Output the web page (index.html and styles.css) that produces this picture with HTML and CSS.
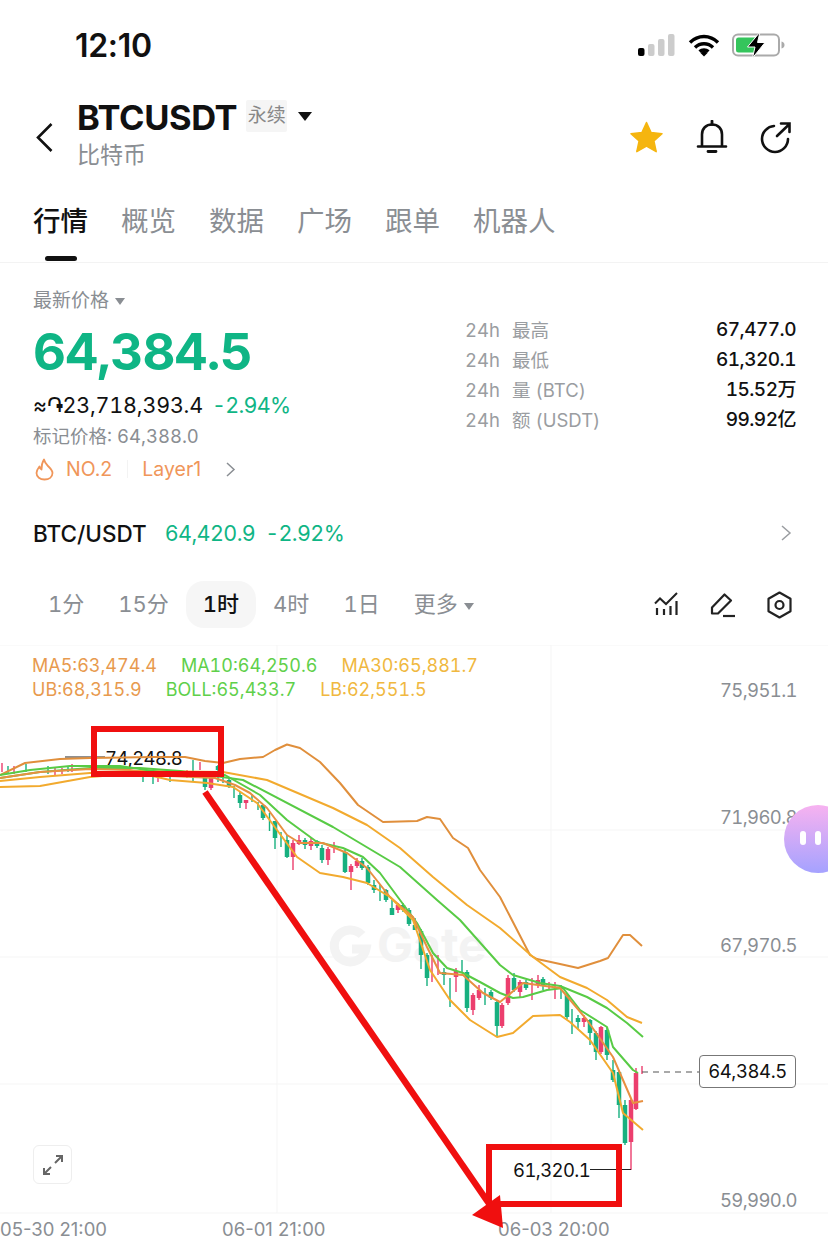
FILE: index.html
```html
<!DOCTYPE html>
<html lang="zh">
<head>
<meta charset="utf-8">
<title>BTCUSDT</title>
<link rel="stylesheet" href="styles.css">
</head>
<body>
<div class="page">
  <div class="status">
    <span class="clock">12:10</span>
    <div class="status-icons">
      <svg class="signal" width="37" height="24" viewBox="0 0 37 24"><rect x="0" y="15" width="6.5" height="8" rx="2" fill="#000"/><rect x="10" y="11" width="6.5" height="12" rx="2" fill="#ccc"/><rect x="20" y="6" width="6.5" height="17" rx="2" fill="#ccc"/><rect x="30" y="1" width="6.5" height="22" rx="2" fill="#ccc"/></svg>
      <svg class="wifi" width="32" height="24" viewBox="0 0 32 24"><path d="M2 9.5C10 1.5 22 1.5 30 9.5M7 14.5C12 9.5 20 9.5 25 14.5M11.5 18.5C14 16.5 18 16.5 20.5 18.5" fill="none" stroke="#000" stroke-width="3.4"/><path d="M12.5 20L16 16.6 19.500 20 16 23.500Z" fill="#000"/></svg>
      <svg class="battery" width="53" height="26" viewBox="0 0 53 26"><rect x="1" y="2.500" width="46" height="21" rx="5" fill="#fff" stroke="#aaa" stroke-width="2"/><rect x="4" y="5.500" width="22" height="15" rx="2.500" fill="#35c55c"/><path d="M49.500 9.500c2 .6 3 1.800 3 3.500s-1 2.900-3 3.500z" fill="#aaa"/><path d="M28 0L15.500 15H23L20.500 26 33 10.500H25.500Z" fill="#000" stroke="#fff" stroke-width="1"/></svg>
    </div>
  </div>

  <header class="head">
    <svg class="back" width="19" height="31" viewBox="0 0 19 31"><path d="M16.500 2L3 15.500 16.500 29" fill="none" stroke="#111" stroke-width="2.600"/></svg>
    <div class="title-block">
      <div class="title-row">
        <span class="symbol">BTCUSDT</span>
        <span class="tag">永续</span>
        <span class="caret"></span>
      </div>
      <div class="subtitle">比特币</div>
    </div>
    <div class="head-actions">
      <svg width="35" height="33" viewBox="0 0 35 33"><path d="M17.500 1.500l4.600 10 10.900 1.200-8.100 7.300 2.300 10.700-9.700-5.500-9.700 5.500 2.300-10.700L2 12.700l10.900-1.200z" fill="#f5b50f" stroke="#f5b50f" stroke-width="1.500" stroke-linejoin="round"/></svg>
      <svg width="32" height="34" viewBox="0 0 32 34"><path d="M6 26V14.500C6 8.500 10 4.500 16 4.500S26 8.500 26 14.500V26M2 26.500H30" fill="none" stroke="#111" stroke-width="2.600" stroke-linecap="round"/><path d="M16 1V4.500M12 31.500H20" stroke="#111" stroke-width="2.800" stroke-linecap="round"/></svg>
      <svg width="32" height="33" viewBox="0 0 32 33"><path d="M14 5C7.500 5.500 2 11 2 18 2 25 8 31 15 31 22 31 28 25 28 18" fill="none" stroke="#111" stroke-width="2.600" stroke-linecap="round"/><path d="M17 15L29.500 3M21 2.500H29.500V11" fill="none" stroke="#111" stroke-width="2.600" stroke-linecap="round"/></svg>
    </div>
  </header>

  <nav class="tabs">
    <div class="tab active"><span>行情</span><i class="tab-bar"></i></div>
    <div class="tab"><span>概览</span></div>
    <div class="tab"><span>数据</span></div>
    <div class="tab"><span>广场</span></div>
    <div class="tab"><span>跟单</span></div>
    <div class="tab"><span>机器人</span></div>
  </nav>

  <section class="quote">
    <div class="quote-left">
      <div class="last-label">最新价格<span class="caret small"></span></div>
      <div class="price">64,384.5</div>
      <div class="fiat">≈֏23,718,393.4<span class="change">-2.94%</span></div>
      <div class="mark">标记价格: 64,388.0</div>
      <div class="rank">
        <svg width="19" height="23" viewBox="0 0 19 23"><path d="M9 1.500C10 5.500 11.500 6.500 13.500 8.500 16 11 17.500 12.500 17.500 15 17.500 19 14 21.500 9.500 21.500S1.500 19 1.500 15C1.500 12 3 10.500 4.500 8.500 5 10.500 5.500 11 6.500 11.500 6.500 8 7 4.500 9 1.500Z" fill="none" stroke="#f0965a" stroke-width="1.800" stroke-linejoin="round"/></svg>
        <span>NO.2</span>
        <i class="rank-sep"></i>
        <span>Layer1</span>
        <svg class="rank-arrow" width="11" height="17" viewBox="0 0 11 17"><path d="M2 2L9 8.500 2 15" fill="none" stroke="#8a8e93" stroke-width="1.500"/></svg>
      </div>
    </div>
    <dl class="stats">
      <div class="stat"><dt><span class="h24">24h</span>最高</dt><dd>67,477.0</dd></div>
      <div class="stat"><dt><span class="h24">24h</span>最低</dt><dd>61,320.1</dd></div>
      <div class="stat"><dt><span class="h24">24h</span>量 (BTC)</dt><dd>15.52万</dd></div>
      <div class="stat"><dt><span class="h24">24h</span>额 (USDT)</dt><dd>99.92亿</dd></div>
    </dl>
  </section>

  <div class="spot">
    <span class="spot-name">BTC/USDT</span>
    <span class="spot-val">64,420.9</span>
    <span class="spot-val">-2.92%</span>
    <svg class="spot-arrow" width="12" height="18" viewBox="0 0 12 18"><path d="M2 2L10 9 2 16" fill="none" stroke="#9a9da1" stroke-width="1.500"/></svg>
  </div>

  <div class="periods">
    <span class="period">1分</span>
    <span class="period">15分</span>
    <span class="period on">1时</span>
    <span class="period">4时</span>
    <span class="period">1日</span>
    <span class="period">更多<span class="caret small"></span></span>
    <div class="tools">
      <svg width="25" height="25" viewBox="0 0 25 25"><path d="M1 11.500L6 6.500 12 12 23 1" fill="none" stroke="#222" stroke-width="2"/><path d="M3 16V23M10 17V23M16.500 14V23M22.500 9V23" stroke="#222" stroke-width="2.200"/></svg>
      <svg width="26" height="26" viewBox="0 0 26 26"><path d="M2 21V15.500L14.500 2.500 21 8.500 8 21.500H2Z" fill="none" stroke="#222" stroke-width="2.200" stroke-linejoin="round"/><path d="M13 24H25" stroke="#222" stroke-width="2.200"/></svg>
      <svg width="25" height="28" viewBox="0 0 25 28"><path d="M12.500 1.500L23.500 7.800V20.200L12.500 26.500 1.500 20.200V7.800Z" fill="none" stroke="#222" stroke-width="2.200" stroke-linejoin="round"/><circle cx="12.500" cy="14" r="4" fill="none" stroke="#222" stroke-width="2.200"/></svg>
    </div>
  </div>

  <div class="chart">
    <svg class="plot" width="828" height="601" viewBox="0 645 828 601">
      <path class="grid" d="M0 645H828M0 830H828M0 957H828M0 1084H828M0 1213H828M277 645V1213M551 645V1213"/>
      <g class="watermark">
        <path class="wm-ring" d="M362 935A16 16 0 1 0 366 949H352"/>
        <text class="wm-text" x="377" y="962">Gate</text>
      </g>
      <text class="axis" x="797" y="697">75,951.1</text>
      <text class="axis" x="797" y="824">71,960.8</text>
      <text class="axis" x="797" y="952">67,970.5</text>
      <text class="axis" x="797" y="1207">59,990.0</text>
      <text class="date" x="0" y="1236">05-30 21:00</text>
      <text class="date" x="222" y="1236">06-01 21:00</text>
      <text class="date" x="498" y="1236">06-03 20:00</text>

      <text class="mark-val" x="105" y="765">74,248.8</text>
      <path class="mark-line" d="M65 757H105"/>

      <path class="wick g" d="M8 766V774M26 764V772M48 766V774M68 766V772M143 771V782M153 771V784M170 772V782M193 760V782M205 772V790M218 765V782M223 772V783M229 778V788M234 786V798M240 792V808M252 794V802M258 802V810M263 805V820M269.500 813V831M275 821V849M281 832V847M287 835V858M305 838V849M317 840V848M322 845V863M345 850V873M362 858V870M368 865V885M374 880V893M380 884V901M386 889V902M392 900V915M403 903V912M409 908V926M415 918V930M421 929V969M427 953V986M444 968V985M450 978V1007M462 960V972M467 970V1012M485 988V1005M491 990V1000M497 1000V1036M514 973V992M526 980V990M543 977V990M561 985V999M567 993V1019M572 1009V1034M578 1015V1030M590 1019V1045M596 1031V1060M607 1027V1060M613 1060V1082M619 1070V1118M625 1100V1145"/>
      <path class="wick r" d="M2 763V772M14 766V774M55 768V776M62 768V774M72 764V772M158 774V782M187 770V778M200 762V770M211 772V790M246 800V809M293 840V870M299 835V845M311 838V850M328 847V865M334 842V853M351 864V890M357 858V868M398 903V913M432 955V982M438 955V975M456 968V992M473 993V1015M479 985V1000M502 1003V1028M508 975V1005M520 980V997M532 978V1000M538 975V988M549 982V990M555 982V999M584 1015V1027M601 1026V1054M631 1098V1170M636 1068V1110M642 1066V1074"/>
      <path class="body g" d="M205 774V787M218 766V770M229 780V786M240 795V803M263 805V818M275 821V838M287 840V857M305 840V845M317 841V846M322 848V860M345 852V872M362 861V868M368 867V883M374 885V890M386 890V900M392 908V915M403 905V910M409 910V924M415 925V930M421 931V955M427 955V978M444 972V975M467 972V1008M491 992V998M497 1002V1026M514 978V990M526 982V988M543 979V985M567 995V1017M578 1018V1022M590 1020V1033M596 1033V1052M607 1030V1055M613 1070V1080M619 1072V1105M625 1105V1143"/>
      <path class="body r" d="M211 775V788M246 800V803M293 843V857M299 840V844M311 841V846M328 849V860M351 866V872M357 861V866M398 905V910M456 971V977M473 995V1010M479 990V998M502 1005V1026M508 978V1003M520 982V992M538 980V985M584 1018V1022M601 1027V1052M631 1100V1142M636 1073V1109"/>

      <polyline class="l ub" points="0,775 25,763 60,759 90,758 155,757 185,757 205,761 223,763 240,759 263,757 275,750 287,744.500 300,748 320,762 340,783 358,805 383,822 417,821 427,817 440,819 453,838 468,848 480,870 500,897 530,955 537,959 560,964 578,968 600,961 608,958 623,935 630,935 642,946"/>
      <polyline class="l ma30" points="0,781 40,777 90,773 140,771 223,772 267,780 333,808 367,825 400,848 433,877 467,905 500,928 533,957 560,977 587,988 607,1000 627,1017 642,1023"/>
      <polyline class="l boll" points="0,778 40,772 90,768 140,768 180,771 243,780 333,827 400,867 437,900 460,920 500,965 513,975 540,983 560,986 587,997 607,1008 627,1023 643,1037"/>
      <polyline class="l ma10" points="0,775 30,770 70,766 120,766 160,772 225,775 260,795 287,820 317,842 343,848 363,857 380,873 400,900 417,923 433,953 447,968 463,973 480,982 500,993 513,998 523,997 547,990 563,988 580,1010 607,1027 613,1047 633,1070 638,1073"/>
      <polyline class="l ma5" points="0,778 40,772 90,769 130,770 170,776 215,778 235,785 250,793 267,808 287,835 300,843 323,843 347,853 367,868 390,897 413,917 427,947 440,973 463,975 483,993 500,1002 523,983 560,988 587,1020 613,1057 633,1103 643,1101"/>
      <polyline class="l lb" points="0,787 40,786 90,777 140,773 170,780 207,783 233,787 257,803 277,830 297,857 320,873 343,877 367,883 390,897 413,920 430,970 450,1000 470,1020 497,1037 513,1033 533,1016 560,1015 570,1022 590,1040 613,1073 623,1113 643,1130"/>

      <path class="dash" d="M642 1072H699"/>
      <path class="mark-line" d="M590 1169.500H631"/>
      <text class="mark-val" x="513" y="1177">61,320.1</text>

      <rect class="redbox" x="94" y="729" width="127" height="45"/>
      <rect class="redbox" x="489" y="1147" width="130" height="57"/>
      <path class="redline" d="M205 792L490 1205"/>
      <polygon class="redhead" points="503,1228 472,1215 500,1195"/>
    </svg>
    <div class="legend">
      <div class="legend-row"><span class="c-ma5">MA5:63,474.4</span><span class="c-ma10">MA10:64,250.6</span><span class="c-ma30">MA30:65,881.7</span></div>
      <div class="legend-row"><span class="c-ma5">UB:68,315.9</span><span class="c-ma10">BOLL:65,433.7</span><span class="c-ma30">LB:62,551.5</span></div>
    </div>
    <div class="last-tag">64,384.5</div>
    <div class="expand">
      <svg width="22" height="22" viewBox="0 0 22 22"><path d="M13 9L20 2M14 2H20V8M9 13L2 20M2 14V20H8" fill="none" stroke="#666" stroke-width="2"/></svg>
    </div>
    <div class="bubble"><i></i><i></i></div>
  </div>
</div>
</body>
</html>
```

FILE: styles.css
```css
* { box-sizing: border-box; }
html, body { margin: 0; padding: 0; background: #fff; }
body { font-family: Inter, "Noto Sans", "Noto Sans CJK SC", sans-serif; font-variant-numeric: tabular-nums; color: #111; }
.page { width: 828px; height: 1246px; overflow: hidden; }

.status { height: 90px; padding: 0 43px 0 75px; display: flex; align-items: center; justify-content: space-between; }
.clock { font-size: 32px; font-weight: 600; letter-spacing: -0.3px; font-variant-numeric: normal; }
.status-icons { display: flex; align-items: center; gap: 14px; }
.wifi { margin: 0 -2px 0 -1px; }

.head { height: 94px; padding: 0 36px 0 35px; display: flex; align-items: center; }
.back { margin-right: 23px; }
.title-block { flex: 1; margin-top: -4px; }
.title-row { display: flex; align-items: center; height: 40px; }
.symbol { font-size: 34.5px; font-weight: 700; letter-spacing: -0.4px; line-height: 40px; }
.tag { margin-left: 9px; width: 41px; height: 32px; background: #f5f5f5; color: #888; font-size: 19px; line-height: 32px; text-align: center; border-radius: 2px; margin-top: -4px; }
.caret { display: inline-block; width: 0; height: 0; margin-left: 11px; margin-top: -4px; border-left: 7px solid transparent; border-right: 7px solid transparent; border-top: 9px solid #111; }
.caret.small { margin-left: 6px; margin-top: 0; vertical-align: 2px; border-left-width: 5.5px; border-right-width: 5.5px; border-top: 7px solid #8a8e93; }
.subtitle { font-size: 23px; line-height: 34px; color: #8a8e93; }
.head-actions { display: flex; align-items: center; gap: 32px; }

.tabs { height: 79px; padding: 18px 33px 0; display: flex; gap: 33px; border-bottom: 1px solid #f3f3f3; }
.tab { display: flex; flex-direction: column; align-items: center; font-size: 27.5px; line-height: 38px; color: #8a8e93; }
.tab.active { color: #111; font-weight: 500; }
.tab-bar { display: block; width: 32px; height: 5px; margin-top: 16px; border-radius: 3px; background: #111; }

.quote { padding: 24px 32px 0 33px; display: flex; justify-content: space-between; }
.last-label { font-size: 19px; line-height: 28px; color: #8a8e93; }
.price { font-size: 51px; font-weight: 700; line-height: 74px; color: #0fb585; letter-spacing: -0.8px; }
.fiat { font-size: 21.5px; line-height: 32px; color: #111; letter-spacing: -0.2px; }
.change { margin-left: 9px; color: #0fb585; letter-spacing: -0.7px; }
.mark { font-size: 18.5px; line-height: 30px; color: #8a8e93; }
.rank { height: 36px; display: flex; align-items: center; font-size: 19.5px; color: #f0965a; font-variant-numeric: normal; }
.rank svg { margin-left: 2px; }
.rank > span:first-of-type { margin-left: 12px; }
.rank-sep { width: 1px; height: 18px; margin: 0 14.5px; background: #f3f3f3; }
.rank svg.rank-arrow { margin-left: 24px; }

.stats { width: 331px; margin: 28px 0 0; }
.stat { height: 30px; line-height: 20px; display: flex; align-items: center; justify-content: space-between; font-size: 19px; }
.stat dt { color: #9a9da1; height: 20px; font-size: 18.5px; }
.stat dd { margin: 0; height: 20px; color: #111; font-weight: 500; letter-spacing: -0.5px; }
.h24 { display: inline-block; width: 47px; }

.spot { margin-top: 30px; height: 32px; padding: 0 36px 0 33px; display: flex; align-items: center; gap: 10px; font-size: 21.5px; color: #0fb585; }
.spot-name { color: #111; margin-right: 8px; font-weight: 500; font-size: 22.5px; }
.spot-val { letter-spacing: -0.6px; }
.spot-arrow { margin-left: auto; }

.periods { margin-top: 32px; margin-bottom: 17px; height: 47px; padding: 0 36px 0 31px; display: flex; align-items: center; font-size: 22px; color: #8a8e93; }
.period { height: 47px; line-height: 47px; padding: 0 17px; white-space: nowrap; }
.period.on { background: #f6f6f6; border-radius: 18px; color: #111; font-weight: 500; }
.tools { margin-left: auto; display: flex; align-items: center; gap: 31px; }

.chart { position: relative; height: 601px; }
.plot { display: block; }
.grid { fill: none; stroke: #f5f5f5; stroke-width: 1; }
.watermark .wm-ring { fill: none; stroke: #f3f3f3; stroke-width: 9; }
.wm-text { font-size: 48px; font-weight: 700; fill: #f3f3f3; }
.axis { font-size: 18.5px; fill: #8a8e93; text-anchor: end; letter-spacing: -0.6px; }
.date { font-size: 18.5px; fill: #8a8e93; font-variant-numeric: normal; }
.mark-val { font-size: 18.5px; fill: #111; letter-spacing: -0.6px; }
.mark-line { fill: none; stroke: #222; stroke-width: 1.200; }
.wick { fill: none; stroke-width: 1.400; }
.body { fill: none; stroke-width: 4.500; }
.g { stroke: #17b07f; }
.r { stroke: #ec3f6e; }
.l { fill: none; stroke-width: 2; stroke-linejoin: round; }
.ub { stroke: #e08f3c; }
.ma30, .lb { stroke: #f2aa2e; }
.boll, .ma10 { stroke: #58cb45; }
.ma5 { stroke: #e89040; }
.dash { fill: none; stroke: #555; stroke-width: 1.200; stroke-dasharray: 6 5; }
.redbox { fill: none; stroke: #f00f0f; stroke-width: 6; }
.redline { fill: none; stroke: #f00f0f; stroke-width: 6.500; }
.redhead { fill: #f00f0f; }

.legend { position: absolute; left: 32px; top: 9px; font-size: 18px; line-height: 24px; }
.legend-row { display: flex; gap: 24px; white-space: nowrap; }
.c-ma5 { color: #e89a4e; }
.c-ma10 { color: #5fd04a; }
.c-ma30 { color: #f0b840; }

.last-tag { position: absolute; left: 699px; top: 410px; width: 97px; height: 33px; border: 1px solid #777; border-radius: 4px; background: #fff; font-size: 18.5px; line-height: 31px; text-align: center; color: #111; letter-spacing: -0.4px; }
.expand { position: absolute; left: 33px; top: 500px; width: 39px; height: 39px; display: flex; align-items: center; justify-content: center; border: 1px solid #eee; border-radius: 6px; background: #fff; }
.bubble { position: absolute; left: 784px; top: 160px; width: 68px; height: 68px; padding: 26px 0 0 16px; display: flex; gap: 9px; align-items: flex-start; border-radius: 50%; background: linear-gradient(180deg, #f7b2f0, #a5a2ff); }
.bubble i { display: block; width: 6px; height: 14px; border-radius: 3px; background: #fff; }
```
